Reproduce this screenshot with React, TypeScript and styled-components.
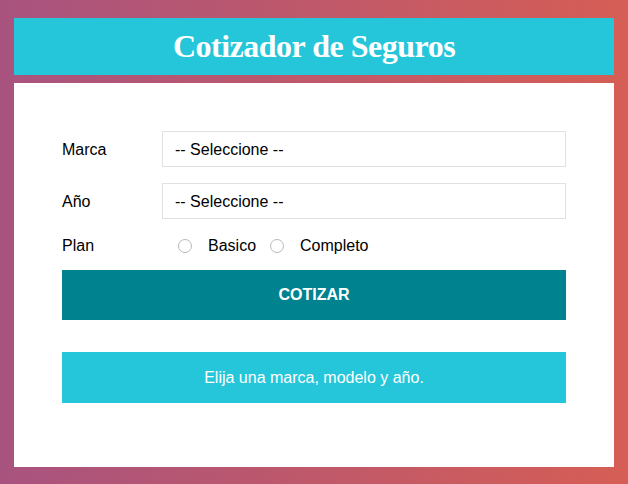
import styled, { createGlobalStyle } from 'styled-components'

const GlobalStyle = createGlobalStyle`
  html, body {
    margin: 0;
    padding: 0;
  }
  body {
    min-height: 484px;
    background: linear-gradient(to right, #a8537f 0%, #d65e55 100%);
    font-family: "Liberation Sans", Arial, sans-serif;
  }
`;

const Page = styled.div`
  width: 600px;
  margin: 0 auto;
  padding-top: 18px;
`;

const Header = styled.header`
  background: #26c6da;
  height: 57px;
  display: flex;
  align-items: center;
  justify-content: center;
`;

const Title = styled.h1`
  margin: 0;
  color: #fff;
  font-family: "Liberation Serif", "DejaVu Serif", serif;
  font-weight: bold;
  font-size: 32px;
  letter-spacing: -0.5px;
`;

const Card = styled.div`
  background: #fff;
  margin-top: 8px;
  height: 384px;
  box-sizing: border-box;
  padding: 48px 48px 0;
`;

const Row = styled.div<{ $last?: boolean }>`
  display: flex;
  align-items: center;
  margin-bottom: ${({ $last }) => ($last ? '0' : '16px')};
`;

const Label = styled.label`
  width: 100px;
  flex: none;
  padding-top: 2px;
  font-size: 16px;
  color: #000;
`;

const Select = styled.select`
  flex: 1;
  height: 36px;
  padding: 0 12px;
  border: 1px solid #e1e1e1;
  background: #fff;
  font-family: "Liberation Sans", Arial, sans-serif;
  font-size: 16px;
  color: #000;
  appearance: none;
  -webkit-appearance: none;
  border-radius: 0;
`;

const Radio = styled.input`
  appearance: none;
  -webkit-appearance: none;
  width: 14px;
  height: 14px;
  margin: 2px 16px 0;
  border: 1px solid #b9b9b9;
  border-radius: 50%;
  background: #fff;
  box-sizing: border-box;

  & + span + & {
    margin-left: 14px;
  }
`;

const RadioText = styled.span`
  padding-top: 2px;
  font-size: 16px;
  color: #000;
`;

const Button = styled.button`
  display: block;
  width: 100%;
  height: 50px;
  margin-top: 15px;
  border: none;
  background: #00838f;
  color: #fff;
  font-family: "Liberation Sans", Arial, sans-serif;
  font-weight: bold;
  font-size: 16px;
  text-transform: uppercase;
`;

const Message = styled.div`
  margin-top: 32px;
  height: 51px;
  display: flex;
  align-items: center;
  justify-content: center;
  background: #26c6da;
  color: #fff;
  font-size: 16px;
`;

function App() {
  return (
    <>
      <GlobalStyle />
      <Page>
        <Header>
          <Title>Cotizador de Seguros</Title>
        </Header>
        <Card>
          <form onSubmit={(e) => e.preventDefault()}>
            <Row>
              <Label>Marca</Label>
              <Select defaultValue="">
                <option value="">-- Seleccione --</option>
                <option value="americano">Americano</option>
                <option value="europeo">Europeo</option>
                <option value="asiatico">Asiatico</option>
              </Select>
            </Row>
            <Row>
              <Label>Año</Label>
              <Select defaultValue="">
                <option value="">-- Seleccione --</option>
              </Select>
            </Row>
            <Row $last>
              <Label>Plan</Label>
              <Radio type="radio" name="plan" value="basico" />
              <RadioText>Basico</RadioText>
              <Radio type="radio" name="plan" value="completo" />
              <RadioText>Completo</RadioText>
            </Row>
            <Button type="submit">Cotizar</Button>
          </form>
          <Message>Elija una marca, modelo y año.</Message>
        </Card>
      </Page>
    </>
  )
}

export default App
